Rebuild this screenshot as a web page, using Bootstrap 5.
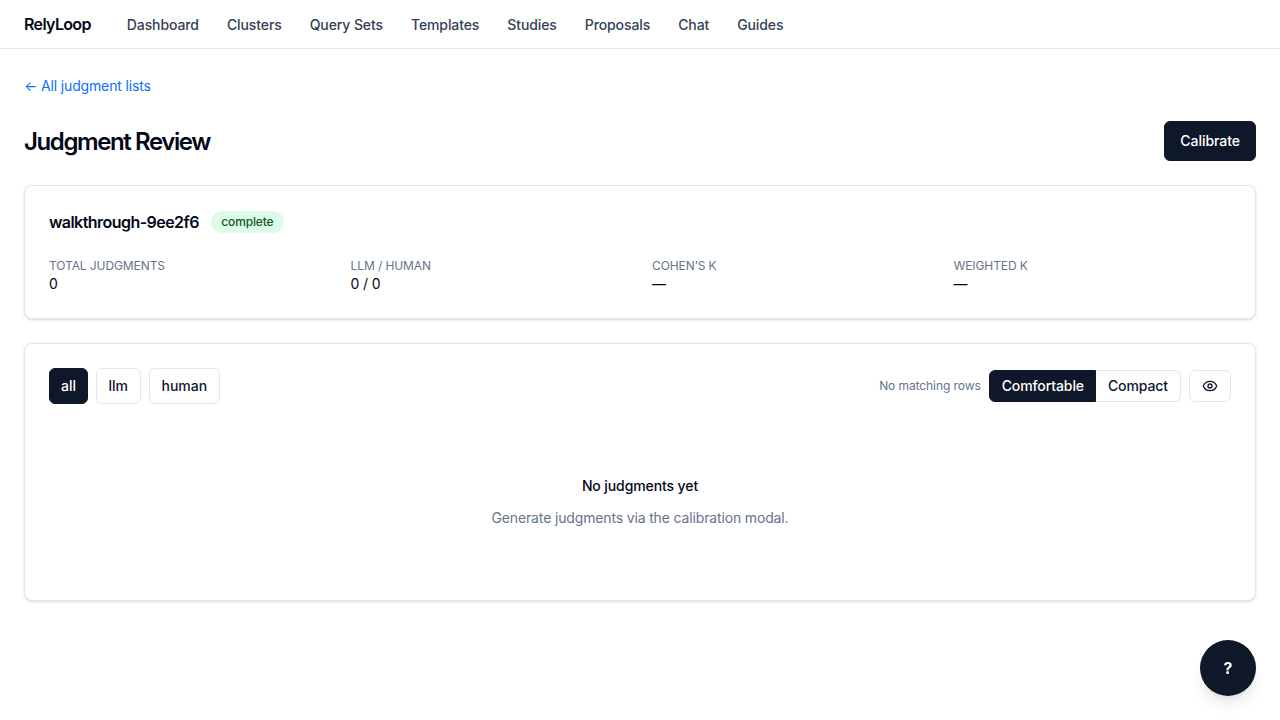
<!DOCTYPE html>
<html lang="en">
<head>
<meta charset="utf-8">
<title>RelyLoop</title>
<link href="https://cdn.jsdelivr.net/npm/bootstrap@5.3.0/dist/css/bootstrap.min.css" rel="stylesheet">
<style>
body{font-family:Inter,"Liberation Sans",sans-serif;font-size:14px;color:#020817;background:#fff;letter-spacing:-.1px}
.topbar{height:49px;padding:0 24px;border-bottom:1px solid #e2e8f0;background:#fff;flex-wrap:nowrap;justify-content:flex-start}
.brandmark{font-size:16px;font-weight:600;letter-spacing:-.65px;color:#020817;margin-right:36px;padding:0;text-decoration:none}
.toplinks{gap:28px;flex-direction:row}
.toplinks a{font-size:14px;font-weight:500;color:#334155;text-decoration:none;padding:0}
.pagewrap{padding:24px}
.backlink{font-size:14px;line-height:20px;color:#0d6efd;text-decoration:none;display:block;margin-top:3px;letter-spacing:-.15px}
.headrow{margin-top:25px;margin-bottom:24px;height:40px}
.pagetitle{font-size:24px;font-weight:600;letter-spacing:-1.4px;line-height:32px;margin:0;padding-top:2px;color:#020817}
.darkbtn{background:#0f172a;color:#fff;border:1px solid #0f172a;font-weight:500;font-size:14px;border-radius:6px;letter-spacing:-.05px}
.darkbtn:hover{background:#0f172a;color:#fff}
.calbtn{height:40px;padding:0 15px 2px}
.panel{border:1px solid #e2e8f0;border-radius:8px;box-shadow:0 1px 3px rgba(0,0,0,.12),0 1px 2px -1px rgba(0,0,0,.1);background:#fff;padding:24px;margin-bottom:24px}
.listname{font-size:16px;font-weight:600;line-height:24px;margin:0;color:#020817;letter-spacing:-.55px}
.statepill{background:#dcfce7;color:#14532d;font-size:12px;font-weight:500;line-height:16px;padding:3px 10.5px;border-radius:999px;margin-left:12px;letter-spacing:-.15px}
.statgrid{display:grid;grid-template-columns:repeat(4,1fr);gap:24px;margin-top:24px}
.statlabel{font-size:12px;line-height:16px;color:#64748b;text-transform:uppercase;letter-spacing:-.09px}
.statvalue{font-size:14px;line-height:20px;color:#020817}
.filterbtn{height:36px;padding:0 11.5px 2px;font-size:14px;font-weight:500;border-radius:6px;border:1px solid #e2e8f0;background:#fff;color:#0f172a;letter-spacing:0}
.filterbtn:last-child{padding:0 12px 2px}
.filterbtn.darkbtn{background:#0f172a;color:#fff;border-color:#0f172a;padding:0 11px 2px}
.rowcount{font-size:12px;color:#64748b;margin-right:8px;letter-spacing:-.08px}
.density button{height:32px;border:1px solid #e2e8f0;border-left:0;padding:0 12px 2px;font-size:14px;font-weight:500;background:#fff;color:#0f172a;border-radius:0 6px 6px 0;letter-spacing:-.1px}
.density button.on{background:#0f172a;color:#fff;border:1px solid #0f172a;padding:0 11px 2px 12px;border-radius:6px 0 0 6px}
.eyebtn{width:42px;height:32px;margin-left:8px;border:1px solid #e2e8f0;border-radius:6px;background:#fff;padding:0;color:#0f172a}
.emptybox{padding-top:72px;padding-bottom:48px;text-align:center}
.emptytitle{font-size:14px;font-weight:500;line-height:20px;margin:0 0 12px;color:#020817}
.emptytext{font-size:14px;line-height:20px;margin:0;color:#64748b;letter-spacing:-.15px}
.helpfab{position:fixed;right:24px;bottom:24px;width:56px;height:56px;border-radius:50%;border:0;background:#0f172a;color:#fff;font-size:16px;font-weight:700;box-shadow:0 10px 15px -3px rgba(0,0,0,.1),0 4px 6px -4px rgba(0,0,0,.1)}
</style>
</head>
<body>
<nav class="navbar topbar d-flex align-items-center">
  <a class="brandmark" href="#">RelyLoop</a>
  <div class="navbar-nav toplinks">
    <a class="nav-link" href="#">Dashboard</a>
    <a class="nav-link" href="#">Clusters</a>
    <a class="nav-link" href="#">Query Sets</a>
    <a class="nav-link" href="#">Templates</a>
    <a class="nav-link" href="#">Studies</a>
    <a class="nav-link" href="#">Proposals</a>
    <a class="nav-link" href="#">Chat</a>
    <a class="nav-link" href="#">Guides</a>
  </div>
</nav>
<main class="pagewrap">
  <a class="backlink" href="#">← All judgment lists</a>
  <div class="headrow d-flex justify-content-between align-items-center">
    <h1 class="pagetitle">Judgment Review</h1>
    <button class="btn darkbtn calbtn" type="button">Calibrate</button>
  </div>
  <section class="card panel">
    <div class="d-flex align-items-center">
      <h2 class="listname">walkthrough-9ee2f6</h2>
      <span class="statepill">complete</span>
    </div>
    <div class="statgrid">
      <div><div class="statlabel">Total judgments</div><div class="statvalue">0</div></div>
      <div><div class="statlabel">LLM / Human</div><div class="statvalue">0 / 0</div></div>
      <div><div class="statlabel">Cohen’s κ</div><div class="statvalue">—</div></div>
      <div><div class="statlabel">Weighted κ</div><div class="statvalue">—</div></div>
    </div>
  </section>
  <section class="card panel">
    <div class="d-flex justify-content-between align-items-center">
      <div class="d-flex gap-2">
        <button class="btn filterbtn darkbtn" type="button">all</button>
        <button class="btn filterbtn" type="button">llm</button>
        <button class="btn filterbtn" type="button">human</button>
      </div>
      <div class="d-flex align-items-center">
        <span class="rowcount">No matching rows</span>
        <div class="density d-flex">
          <button class="btn on" type="button">Comfortable</button>
          <button class="btn" type="button">Compact</button>
        </div>
        <button class="btn eyebtn d-flex align-items-center justify-content-center" type="button" aria-label="Columns">
          <svg width="16" height="16" viewBox="0 0 24 24" fill="none" stroke="currentColor" stroke-width="2" stroke-linecap="round" stroke-linejoin="round"><path d="M2.06 12.35a1 1 0 0 1 0-.7 10.75 10.75 0 0 1 19.88 0 1 1 0 0 1 0 .7 10.75 10.75 0 0 1-19.88 0"/><circle cx="12" cy="12" r="3"/></svg>
        </button>
      </div>
    </div>
    <div class="emptybox">
      <p class="emptytitle">No judgments yet</p>
      <p class="emptytext">Generate judgments via the calibration modal.</p>
    </div>
  </section>
</main>
<button class="btn helpfab" type="button">?</button>
</body>
</html>
